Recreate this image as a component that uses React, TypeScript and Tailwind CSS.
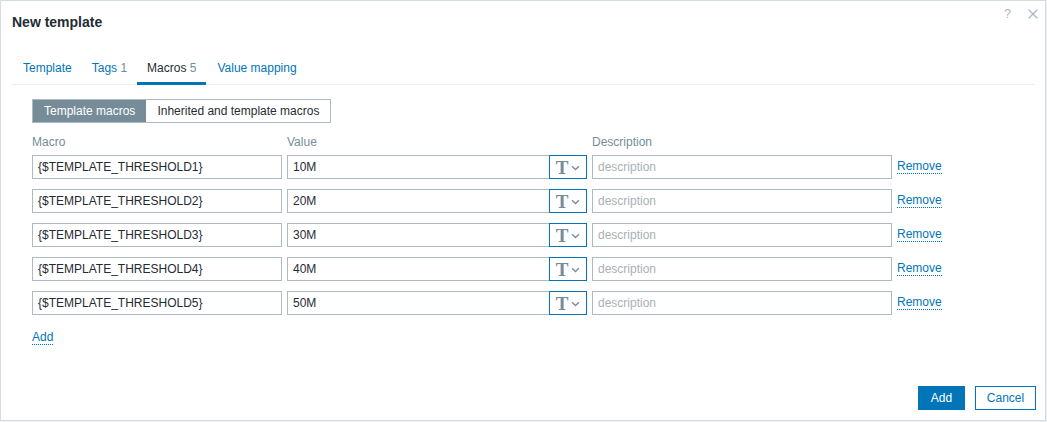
import { X } from 'lucide-react'

const macros = [
  { name: '{$TEMPLATE_THRESHOLD1}', value: '10M' },
  { name: '{$TEMPLATE_THRESHOLD2}', value: '20M' },
  { name: '{$TEMPLATE_THRESHOLD3}', value: '30M' },
  { name: '{$TEMPLATE_THRESHOLD4}', value: '40M' },
  { name: '{$TEMPLATE_THRESHOLD5}', value: '50M' },
]

function TypeButton() {
  return (
    <button className="flex h-6 w-[38px] shrink-0 items-center justify-center gap-[3px] border border-[#0275b8] bg-white">
      <span className="text-[19px] font-bold leading-none text-[#768d99] [font-family:'Liberation_Serif',serif]">T</span>
      <svg width="9" height="6" viewBox="0 0 9 6" className="mt-[2px]">
        <path d="M1 1.2l3.5 3.3L8 1.2" fill="none" stroke="#768d99" strokeWidth="1.3" />
      </svg>
    </button>
  )
}

export default function App() {
  return (
    <div className="h-[422px] w-[1047px] bg-[#eceff1] [font-family:'Liberation_Sans',Arial,sans-serif]">
      <div className="flex h-[421px] w-[1046px] flex-col border border-[#d5dce0] bg-white">
        <div className="flex h-[42px] justify-between pl-[11px] pr-[4px]">
          <h1 className="self-center pt-px text-[14px] font-bold text-[#1f2c33]">New template</h1>
          <div className="mt-[5px] flex h-4 items-center gap-[14px] self-start text-[#a8b8c2]">
            <span className="text-[12px]">?</span>
            <X size={16} strokeWidth={1.8} />
          </div>
        </div>

        <div className="mx-[11px] mt-[16px] flex border-b border-[#ebeef0] text-[12px]">
          <div className="pb-[7px] pl-[11px] pr-[10px] text-[#0275b8]">Template</div>
          <div className="px-[10px] pb-[7px] text-[#0275b8]">
            Tags <span className="text-[#768d99]">1</span>
          </div>
          <div className="-mb-px border-b-[3px] border-[#0275b8] px-[10px] pb-[4px] text-[#1f2c33]">
            Macros <span className="text-[#768d99]">5</span>
          </div>
          <div className="px-[11px] pb-[7px] text-[#0275b8]">Value mapping</div>
        </div>

        <div className="pl-[31px] pt-[14px]">
          <div className="flex h-6 w-fit border border-[#acbbc2] text-[12px]">
            <div className="flex items-center bg-[#768d99] px-[11px] text-white">Template macros</div>
            <div className="flex items-center bg-white px-[11px] text-[#1f2c33]">Inherited and template macros</div>
          </div>

          <div className="mt-[10px] flex text-[12px] text-[#768d99]">
            <div className="w-[255px]">Macro</div>
            <div className="w-[305px]">Value</div>
            <div>Description</div>
          </div>

          <div className="mt-[4px] flex flex-col gap-[10px]">
            {macros.map((m) => (
              <div key={m.name} className="flex items-center text-[12px]">
                <div className="flex h-6 w-[250px] items-center border border-[#acbbc2] px-[5px] text-[#1f2c33]">{m.name}</div>
                <div className="ml-[5px] flex">
                  <div className="flex h-6 w-[262px] items-center border border-r-0 border-[#acbbc2] px-[5px] text-[#1f2c33]">{m.value}</div>
                  <TypeButton />
                </div>
                <div className="ml-[5px] flex h-6 w-[300px] items-center border border-[#acbbc2] px-[5px] text-[#aab0b5]">description</div>
                <span className="ml-[5px] border-b border-dotted border-[#0275b8] leading-[13px] text-[#0275b8]">Remove</span>
              </div>
            ))}
          </div>

          <span className="mt-[16px] inline-block border-b border-dotted border-[#0275b8] text-[12px] leading-[13px] text-[#0275b8]">Add</span>
        </div>

        <div className="mt-auto flex justify-end gap-[10px] pb-[10px] pr-[9px] text-[12px]">
          <button className="h-6 w-[47px] border border-[#0275b8] bg-[#0275b8] text-white">Add</button>
          <button className="h-6 w-[61px] border border-[#0275b8] bg-white text-[#0275b8]">Cancel</button>
        </div>
      </div>
    </div>
  )
}
